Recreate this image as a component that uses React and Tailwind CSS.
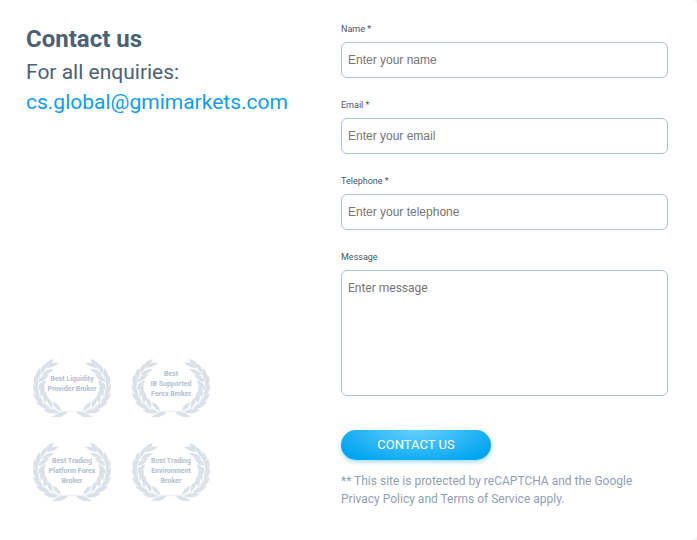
import React, { useState } from "react";

const awards = [
  ["Best Liquidity", "Provider Broker"],
  ["Best", "IB Supported", "Forex Broker"],
  ["Best Trading", "Platform Forex", "Broker"],
  ["Best Trading", "Environment", "Broker"],
];

const fields = [
  { name: "name", label: "Name *", type: "text", placeholder: "Enter your name" },
  { name: "email", label: "Email *", type: "email", placeholder: "Enter your email" },
  { name: "telephone", label: "Telephone *", type: "tel", placeholder: "Enter your telephone" },
];

/* ================= LAUREL ================= */
const Branch = () => (
  <g>
    <path d="M12 8Q13 1 21 0Q19 6 12 8Z" />
    <path d="M13 9Q18 2 26 4Q20 9 13 9Z" />
    <path d="M7 15Q7 7 14 4Q14 11 7 15Z" />
    <path d="M8 16Q13 9 21 10Q16 16 8 16Z" />
    <path d="M4 22Q1 14 7 9Q9 17 4 22Z" />
    <path d="M5 23Q8 15 16 15Q13 22 5 23Z" />
    <path d="M4 30Q-2 23 2 16Q7 22 4 30Z" />
    <path d="M5 31Q5 23 13 21Q12 29 5 31Z" />
    <path d="M6 38Q-1 33 0 25Q7 30 6 38Z" />
    <path d="M8 38Q5 30 11 26Q14 33 8 38Z" />
    <path d="M10 45Q2 43 0 34Q9 37 10 45Z" />
    <path d="M12 44Q8 37 12 32Q17 38 12 44Z" />
    <path d="M17 50Q9 51 3 43Q12 42 17 50Z" />
    <path d="M19 49Q13 44 14 38Q21 42 19 49Z" />
    <path d="M26 53Q18 57 10 51Q18 48 26 53Z" />
    <path d="M28 52Q20 49 20 43Q27 45 28 52Z" />
    <path d="M35 53Q29 60 19 58Q26 52 35 53Z" />
    <path
      d="M13 8Q4 17 4 28Q6 42 18 49Q28 54 36 52L40 53"
      fill="none"
      stroke="currentColor"
      strokeWidth="0.5"
    />
  </g>
);

const Award = ({ lines }) => (
  <li className="relative flex h-[58px] w-[78px] items-center justify-center pb-2 nth-[n+3]:pb-[2px]">
    <svg
      viewBox="0 0 78 58"
      fill="currentColor"
      className="absolute inset-0 h-full w-full text-[#dbe1e8]"
      aria-hidden="true"
    >
      <Branch />
      <g transform="matrix(-1 0 0 1 78 0)">
        <Branch />
      </g>
    </svg>
    <p className="relative whitespace-nowrap text-center text-[7px] leading-[10px] font-bold text-[#b3c0ce]">
      {lines.map((line) => (
        <span key={line} className="block">
          {line}
        </span>
      ))}
    </p>
  </li>
);

function ContactUs() {
  const [form, setForm] = useState({ name: "", email: "", telephone: "", message: "" });

  const handleChange = (e) => {
    setForm({ ...form, [e.target.name]: e.target.value });
  };

  const handleSubmit = (e) => {
    e.preventDefault();
  };

  return (
    <div className="min-h-screen bg-[#f3f3f3] font-['Roboto',sans-serif]">
      <section className="grid min-h-screen grid-cols-[315fr_327fr] items-start rounded-r-[5px] bg-white pt-[22px] pr-[29px] pb-[30px] pl-[26px]">

        {/* INFO */}
        <div className="flex h-full flex-col justify-between text-[#4a6178]">
          <div>
            <h1 className="text-2xl leading-[34px] font-bold">Contact us</h1>
            <p className="text-[21px] leading-8">For all enquiries:</p>
            <a
              href="mailto:cs.global@gmimarkets.com"
              className="text-[21px] leading-7 text-[#109cf1]"
            >
              cs.global@gmimarkets.com
            </a>
          </div>

          <ul className="flex max-w-[200px] flex-wrap gap-x-[21px] gap-y-[26px] pb-[9px] pl-[7px]">
            {awards.map((lines) => (
              <Award key={lines.join(" ")} lines={lines} />
            ))}
          </ul>
        </div>

        {/* FORM */}
        <form onSubmit={handleSubmit} noValidate>
          {fields.map((field) => (
            <div key={field.name} className="mb-5">
              <label
                htmlFor={field.name}
                className="mb-[6px] block text-[9px] leading-[14px] text-[#4a5568]"
              >
                {field.label}
              </label>
              <input
                id={field.name}
                name={field.name}
                type={field.type}
                placeholder={field.placeholder}
                value={form[field.name]}
                onChange={handleChange}
                className="block h-9 w-full rounded-md border border-[#b3bfcc] px-[6px] font-['Liberation_Sans',sans-serif] text-xs placeholder:text-[#757575]"
              />
            </div>
          ))}

          <label
            htmlFor="message"
            className="mb-[6px] block text-[9px] leading-[14px] text-[#4a5568]"
          >
            Message
          </label>
          <textarea
            id="message"
            name="message"
            placeholder="Enter message"
            value={form.message}
            onChange={handleChange}
            className="block h-[126px] w-full resize-none rounded-md border border-[#b3bfcc] px-[6px] py-[9px] text-xs placeholder:text-[#757575]"
          />

          <button
            type="submit"
            className="mt-[34px] block h-[30px] w-[150px] rounded-full bg-[radial-gradient(ellipse_at_top,#66d0ff_0%,#00a4f0_85%)] text-[13px] text-white shadow-[0_2px_4px_rgba(0,164,240,0.4)]"
          >
            CONTACT US
          </button>

          <p className="mt-3 text-xs leading-[18px] text-[#90a0b2]">
            ** This site is protected by reCAPTCHA and the Google Privacy Policy
            and Terms of Service apply.
          </p>
        </form>
      </section>
    </div>
  );
}

export default ContactUs;
